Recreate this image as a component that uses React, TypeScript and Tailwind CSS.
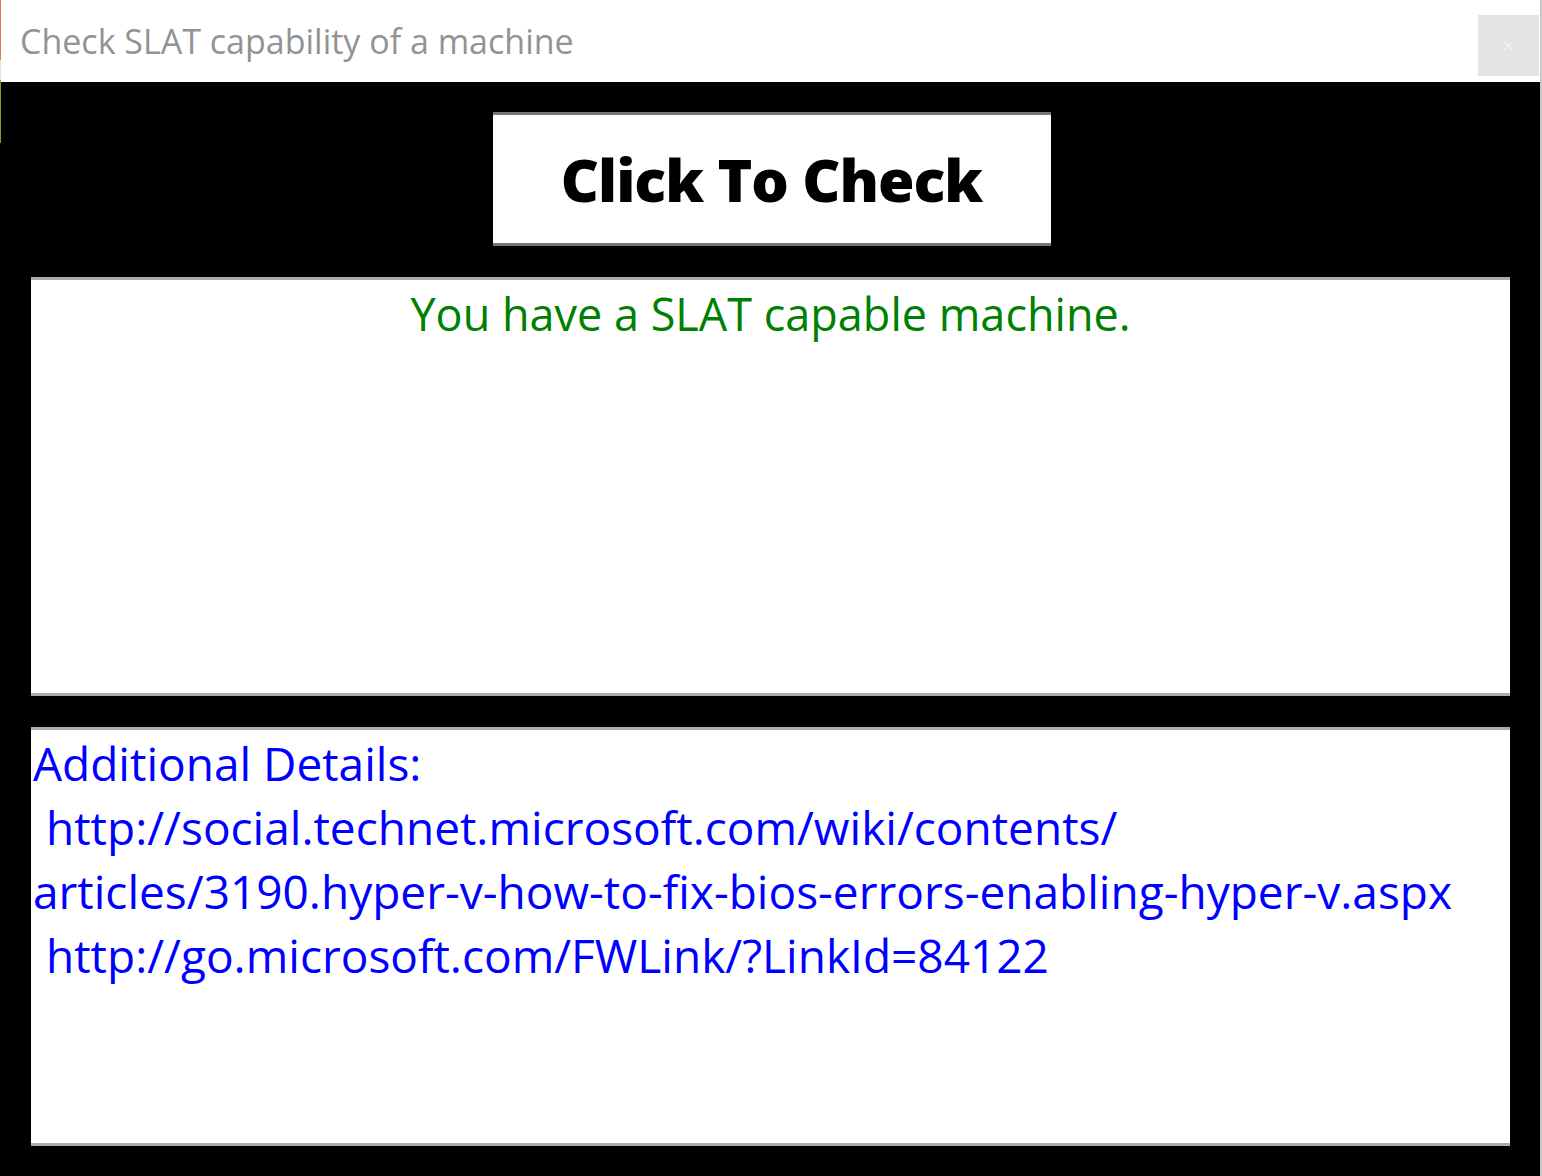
import React from "react";

const FONT = { fontFamily: '"Open Sans", "Noto Sans", sans-serif' };

function TitleBar() {
  return (
    <div className="flex h-[82px] shrink-0 items-start bg-white">
      <p className="flex-1 pl-[19px] pt-[24px] text-[34px] leading-none text-[#939393]">
        Check SLAT capability of a machine
      </p>
      <button className="mr-[1px] mt-[15px] flex h-[61px] w-[61px] items-center justify-center bg-[#e4e4e4] text-[20px] text-[#f4f4f4]">
        ×
      </button>
    </div>
  );
}

export default function App() {
  return (
    <div className="relative flex h-[1176px] w-[1542px] bg-white" style={FONT}>
      {/* window accent strip on the left edge */}
      <div className="flex w-px shrink-0 flex-col">
        <div className="h-[60px] bg-[#e8765e]" />
        <div className="h-[20px] bg-[#e2e2e2]" />
        <div className="h-[63px] bg-[#78a22f]" />
        <div className="flex-1 bg-black" />
      </div>

      <div className="flex flex-1 flex-col">
        <TitleBar />

        <main className="flex flex-1 flex-col items-center bg-black pt-[30px]">
          <button className="ml-[2px] flex h-[134px] w-[558px] items-center justify-center border-y-[3px] border-[#777777] bg-white text-[59px] font-extrabold tracking-[-1px] text-black">
            Click To Check
          </button>

          <section className="mt-[31px] h-[419px] w-[1479px] border-y-[3px] border-[#ababab] bg-white text-center">
            <p className="pt-[2px] text-[45px] leading-[64px] text-[#008000]">
              You have a SLAT capable machine.
            </p>
          </section>

          <section className="mt-[31px] h-[419px] w-[1479px] border-y-[3px] border-[#ababab] bg-white pl-[2px] pt-[1px] text-[46px] leading-[64px] text-[#0000ff]">
            <p>Additional Details:</p>
            <p className="pl-[13px]">http://social.technet.microsoft.com/wiki/contents/</p>
            <p>articles/3190.hyper-v-how-to-fix-bios-errors-enabling-hyper-v.aspx</p>
            <p className="pl-[13px]">http://go.microsoft.com/FWLink/?LinkId=84122</p>
          </section>
        </main>
      </div>

      <div className="w-[2px] shrink-0 bg-[#c8c8c8]" />
    </div>
  );
}
